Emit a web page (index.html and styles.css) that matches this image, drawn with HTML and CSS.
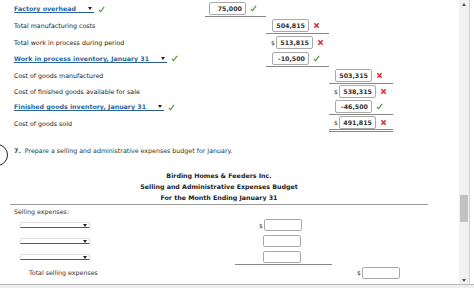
FILE: index.html
```html
<!DOCTYPE html>
<html>
<head>
<meta charset="utf-8">
<link rel="stylesheet" href="styles.css">
</head>
<body>
<div class="frame">
  <div class="content">
    <div class="sched">
      <div class="lbl"><span class="sel">Factory overhead</span><svg class="ok" viewBox="0 0 8 8"><path d="M1 4.3 L3 6.5 L7 1"/></svg></div>
      <div class="cell c1 ul"><span class="box">75,000</span><svg class="ok" viewBox="0 0 8 8"><path d="M1 4.3 L3 6.5 L7 1"/></svg></div>
      <div></div><div></div>

      <div class="lbl txt">Total manufacturing costs</div>
      <div></div>
      <div class="cell ul"><span class="box">504,815</span><svg class="bad" viewBox="0 0 8 8"><path d="M1.5 1.5 L6.5 6.5 M6.5 1.5 L1.5 6.5"/></svg></div>
      <div></div>

      <div class="lbl txt">Total work in process during period</div>
      <div></div>
      <div class="cell"><span class="dol">$</span><span class="box">513,815</span><svg class="bad" viewBox="0 0 8 8"><path d="M1.5 1.5 L6.5 6.5 M6.5 1.5 L1.5 6.5"/></svg></div>
      <div></div>

      <div class="lbl"><span class="sel">Work in process inventory, January 31</span><svg class="ok" viewBox="0 0 8 8"><path d="M1 4.3 L3 6.5 L7 1"/></svg></div>
      <div></div>
      <div class="cell ul"><span class="box">-10,500</span><svg class="ok" viewBox="0 0 8 8"><path d="M1 4.3 L3 6.5 L7 1"/></svg></div>
      <div></div>

      <div class="lbl txt">Cost of goods manufactured</div>
      <div></div><div></div>
      <div class="cell ul"><span class="box">503,315</span><svg class="bad" viewBox="0 0 8 8"><path d="M1.5 1.5 L6.5 6.5 M6.5 1.5 L1.5 6.5"/></svg></div>

      <div class="lbl txt">Cost of finished goods available for sale</div>
      <div></div><div></div>
      <div class="cell"><span class="dol">$</span><span class="box">538,315</span><svg class="bad" viewBox="0 0 8 8"><path d="M1.5 1.5 L6.5 6.5 M6.5 1.5 L1.5 6.5"/></svg></div>

      <div class="lbl"><span class="sel">Finished goods inventory, January 31</span><svg class="ok" viewBox="0 0 8 8"><path d="M1 4.3 L3 6.5 L7 1"/></svg></div>
      <div></div><div></div>
      <div class="cell ul"><span class="box">-46,500</span><svg class="ok" viewBox="0 0 8 8"><path d="M1 4.3 L3 6.5 L7 1"/></svg></div>

      <div class="lbl txt">Cost of goods sold</div>
      <div></div><div></div>
      <div class="cell dbl"><span class="dol">$</span><span class="box">491,815</span><svg class="bad" viewBox="0 0 8 8"><path d="M1.5 1.5 L6.5 6.5 M6.5 1.5 L1.5 6.5"/></svg></div>
    </div>

    <div class="question">
      <span class="marker"></span>
      <b>7.</b>&nbsp; Prepare a selling and administrative expenses budget for January.
    </div>

    <div class="budget">
      <div class="titles">
        <div>Birding Homes &amp; Feeders Inc.</div>
        <div>Selling and Administrative Expenses Budget</div>
        <div>For the Month Ending January 31</div>
      </div>
      <div class="sec">Selling expenses:</div>
      <div class="bgrid">
        <div class="blbl"><span class="esel"></span></div>
        <div class="bcell"><span class="dol">$</span><span class="ebox"></span></div>
        <div></div>
        <div class="blbl"><span class="esel"></span></div>
        <div class="bcell"><span class="ebox shift"></span></div>
        <div></div>
        <div class="blbl"><span class="esel"></span></div>
        <div class="bcell ul"><span class="ebox shift"></span></div>
        <div></div>
        <div class="blbl total">Total selling expenses</div>
        <div></div>
        <div class="bcell tcell"><span class="dol">$</span><span class="ebox"></span></div>
      </div>
    </div>
  </div>
  <div class="scrollbar">
    <span class="arr up"></span>
    <span class="thumb"></span>
    <span class="arr down"></span>
  </div>
  <div class="edge"></div>
</div>
<div class="footer"></div>
</body>
</html>
```

FILE: styles.css
```css
* { box-sizing: border-box; }
html, body { margin: 0; padding: 0; }
body {
  width: 474px;
  height: 289px;
  overflow: hidden;
  background: #fff;
  font-family: "DejaVu Sans", Verdana, sans-serif;
  font-size: 6.3px;
  color: #222;
}
.frame {
  display: flex;
  height: 285px;
  border-bottom: 1px solid #b8b8b8;
}
.content {
  flex: 1;
  position: relative;
  overflow: hidden;
  padding-top: 1px;
}
.sched {
  display: grid;
  grid-template-columns: 205px 61px 63px 64px;
  grid-template-rows: 16px 17px 16px 17px 17px 15px 16px 17px;
}
.lbl {
  display: flex;
  align-items: center;
  padding-left: 14px;
}
.sel {
  display: inline-block;
  position: relative;
  color: #2a65a0;
  font-weight: bold;
  text-decoration: underline;
  border-bottom: 1px solid #2f5f8c;
  padding-right: 18px;
  line-height: 7px;
}
.sel::after {
  content: "";
  position: absolute;
  right: 2px;
  top: 2px;
  border-left: 2px solid transparent;
  border-right: 2px solid transparent;
  border-top: 3px solid #222;
}
.cell {
  display: flex;
  align-items: center;
  padding-left: 6px;
}
.c1 { padding-left: 4px; }
.ul { border-bottom: 1px solid #888; }
.dbl { border-bottom: 3px double #888; }
.dol {
  width: 4px;
  font-size: 6px;
  color: #333;
  margin-right: 1px;
  margin-left: -1px;
}
.box {
  display: inline-block;
  width: 37px;
  height: 13px;
  line-height: 11px;
  border: 1px solid #aaa;
  border-radius: 2px;
  text-align: right;
  padding-right: 3px;
  font-weight: bold;
  color: #333;
  background: #fff;
}
svg.ok, svg.bad {
  width: 7px;
  height: 7px;
  margin-left: 4px;
  fill: none;
}
svg.ok path { stroke: #4c9a3a; stroke-width: 1.3; }
svg.bad path { stroke: #d8262c; stroke-width: 1.6; }
.question {
  position: relative;
  margin-top: 13px;
  padding-left: 14px;
  height: 12px;
  line-height: 12px;
  color: #333;
}
.marker {
  position: absolute;
  left: -14px;
  top: -1px;
  width: 22px;
  height: 22px;
  border: 1.5px solid #222;
  border-radius: 50%;
}
.budget {
  margin-left: 10px;
  width: 418px;
  margin-top: 13px;
}
.titles {
  text-align: center;
  font-weight: bold;
  line-height: 11px;
  color: #222;
  border-bottom: 1px solid #999;
  padding-bottom: 1px;
}
.sec {
  padding-left: 4px;
  height: 12px;
  line-height: 14px;
  color: #333;
}
.bgrid {
  display: grid;
  grid-template-columns: 225px 97px 96px;
  grid-template-rows: 16px 16px 16px 15px;
}
.blbl {
  display: flex;
  align-items: center;
  padding-left: 10px;
}
.total { padding-left: 19px; color: #333; }
.esel {
  position: relative;
  display: inline-block;
  width: 70px;
  height: 6px;
  border: 1px solid #ddd;
  border-bottom: 1px solid #2f5f8c;
  border-radius: 2px 2px 0 0;
}
.esel::after {
  content: "";
  position: absolute;
  right: 2px;
  top: 1px;
  border-left: 2px solid transparent;
  border-right: 2px solid transparent;
  border-top: 3px solid #222;
}
.bcell {
  display: flex;
  align-items: center;
  padding-left: 25px;
}
.ebox {
  display: inline-block;
  width: 38px;
  height: 12px;
  border: 1px solid #aaa;
  border-radius: 2px;
  background: #fff;
}
.ebox.shift { margin-left: 3px; }
.tcell { padding-left: 26px; }
.scrollbar {
  position: relative;
  width: 11px;
  background: #f1f1f1;
  border-right: 1px solid #d0d0d0;
}
.thumb {
  position: absolute;
  left: 1px;
  right: 1px;
  top: 195px;
  height: 27px;
  background: #c1c1c1;
}
.arr {
  position: absolute;
  left: 3px;
  border-left: 2px solid transparent;
  border-right: 2px solid transparent;
}
.up { top: 3px; border-bottom: 3px solid #505050; }
.down { bottom: 2px; border-top: 3px solid #505050; }
.edge {
  width: 4px;
  background: #fff;
}
.footer {
  height: 3px;
  background: #eeeeee;
}
```
